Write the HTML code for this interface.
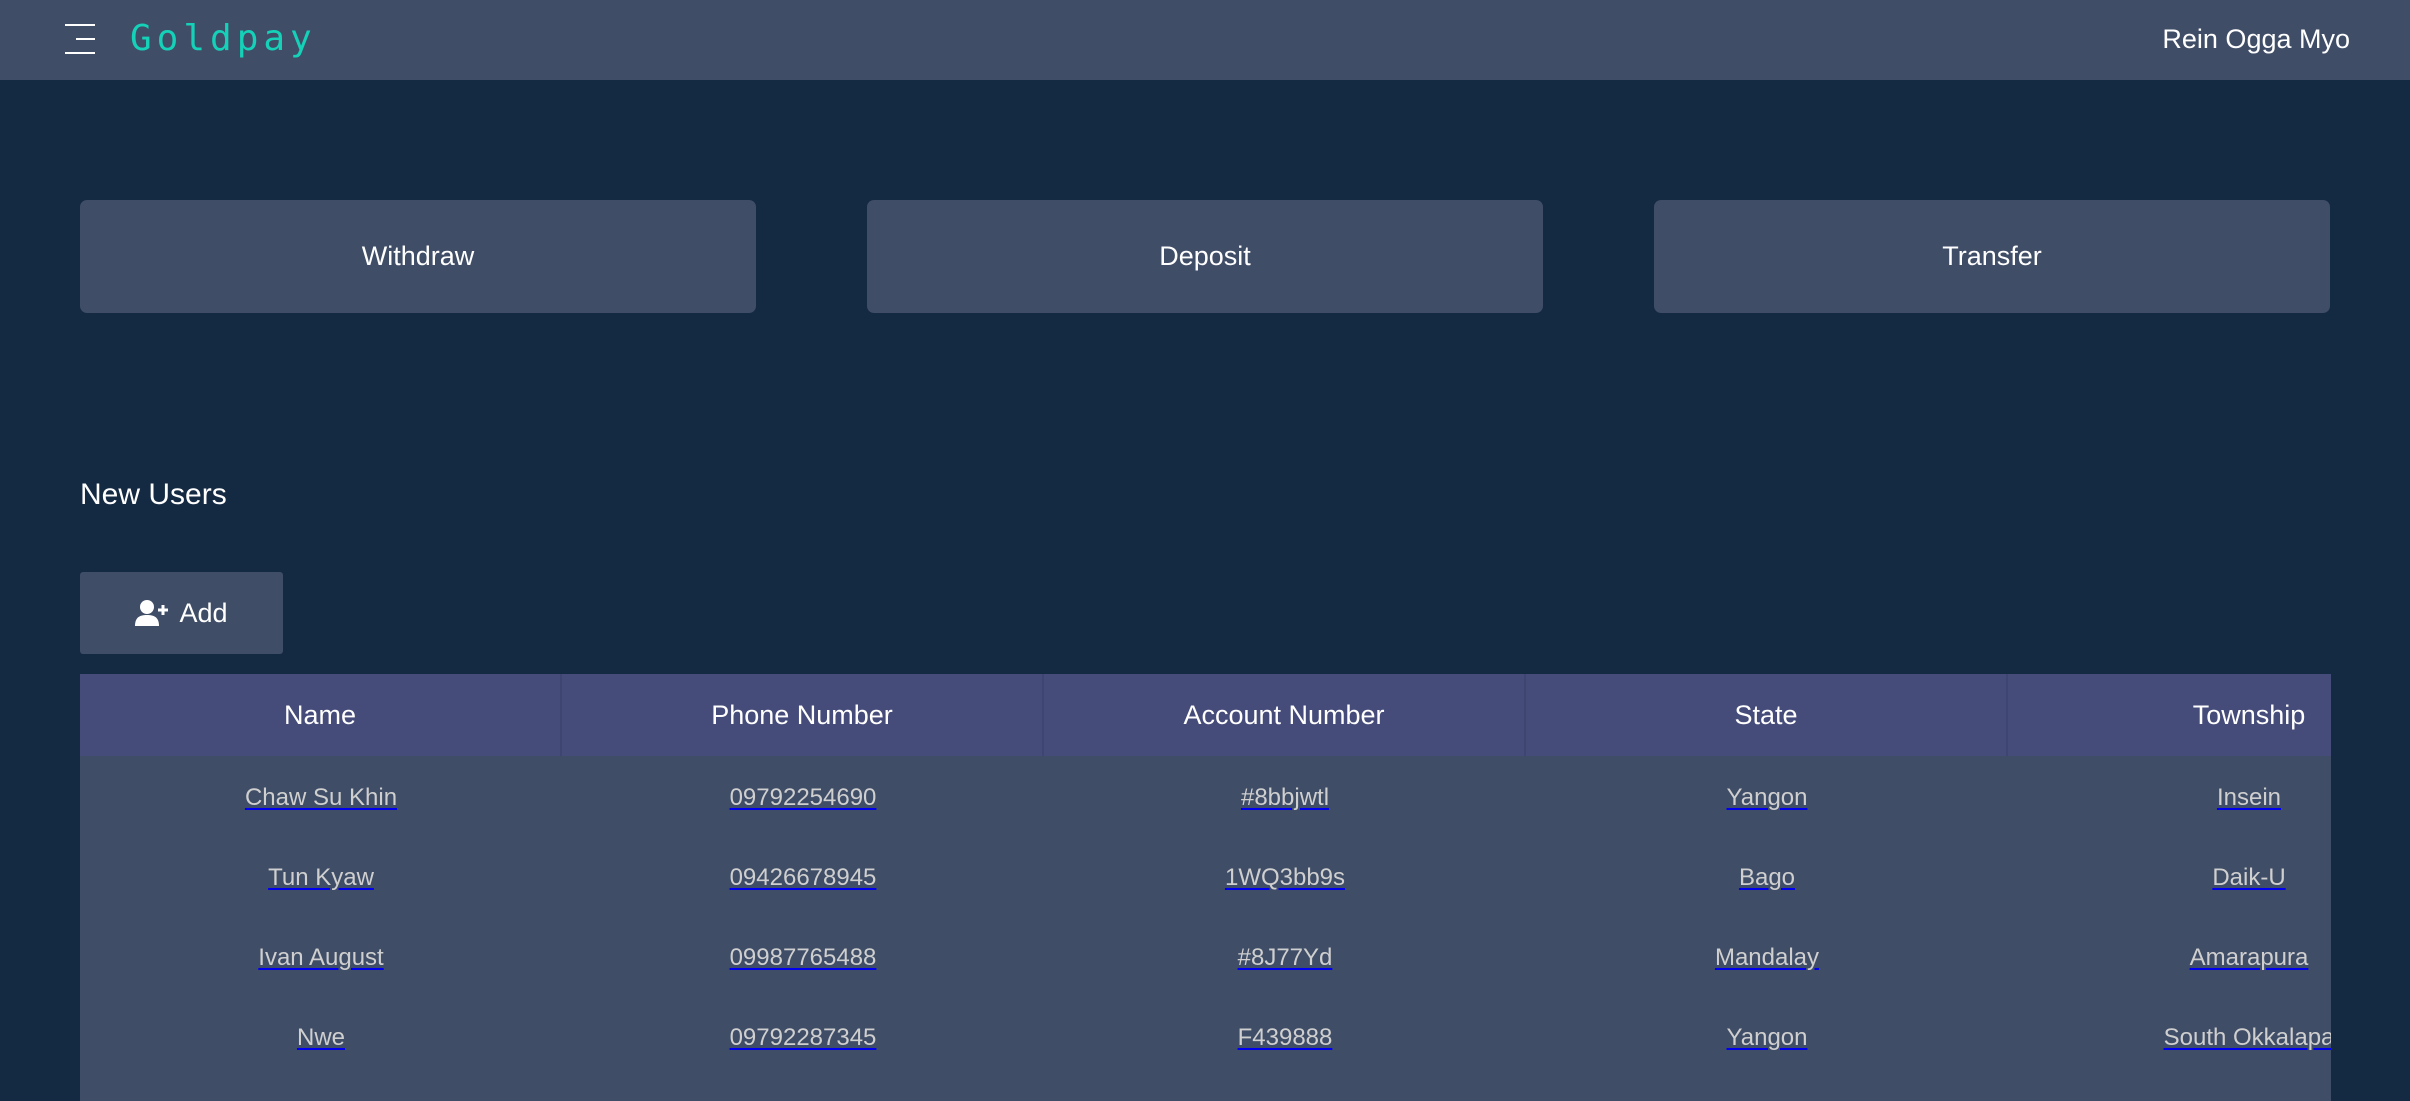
<!DOCTYPE html>
<html><head><meta charset="utf-8"><style>
*{margin:0;padding:0;box-sizing:border-box}
html,body{width:2410px;height:1101px;overflow:hidden;background:#142942;font-family:"Liberation Sans",sans-serif;color:#fff}
.hdr{position:absolute;left:0;top:0;width:2410px;height:80px;background:#3f4d67}
.ham{position:absolute;left:65px;top:24px;width:30px;height:30px}
.ham i{position:absolute;right:0;height:2px;background:#fff}
.logo{position:absolute;left:130px;top:18px;font-family:"DejaVu Sans Mono",monospace;font-size:36px;letter-spacing:5px;color:#14d1b8}
.user{position:absolute;right:60px;top:24px;font-size:27px}
.btn{position:absolute;top:200px;height:113px;width:676px;background:#3f4d67;border-radius:7px;font-size:27px;display:flex;align-items:center;justify-content:center}
.nu{position:absolute;left:80px;top:478px;font-size:30px}
.add{position:absolute;left:80px;top:572px;width:203px;height:82px;background:#3f4d67;border-radius:3px;font-size:27px;display:flex;align-items:center;justify-content:center;gap:8px}
.tbl{position:absolute;left:80px;top:674px;width:2251px;height:427px;background:#3f4d67;overflow:hidden}
.hrow{position:absolute;left:0;top:0;height:82px;width:2410px;background:#454c7a}
.c{position:absolute;width:482px;text-align:center}
.hrow .c{font-size:27px;height:82px;top:0;line-height:82px;border-right:2px solid #3e4570}
.cell{font-size:24px;color:#cfcfcf;text-decoration:underline;text-decoration-color:#0000ee;text-underline-offset:3px;text-decoration-thickness:2px}
</style></head><body>
<div class="hdr">
<div class="ham"><i style="top:0;width:30px"></i><i style="top:14px;width:19px"></i><i style="top:28px;width:30px"></i></div>
<div class="logo">Goldpay</div>
<div class="user">Rein Ogga Myo</div>
</div>
<div class="btn" style="left:80px">Withdraw</div>
<div class="btn" style="left:867px">Deposit</div>
<div class="btn" style="left:1654px">Transfer</div>
<div class="nu">New Users</div>
<div class="add"><svg width="36" height="28" viewBox="0 0 36 28"><circle cx="12" cy="8" r="7" fill="#fff"/><path d="M0 27 C0 18 5 16 12 16 C19 16 24 18 24 27 Z" fill="#fff"/><path d="M28 6v10M23 11h10" stroke="#fff" stroke-width="3"/></svg><span>Add</span></div>
<div class="tbl">
<div class="hrow">
<div class="c" style="left:0">Name</div>
<div class="c" style="left:482px">Phone Number</div>
<div class="c" style="left:964px">Account Number</div>
<div class="c" style="left:1446px">State</div>
<div class="c" style="left:1928px;border:none">Township</div>
</div>
<div style="position:absolute;left:0;top:110px;width:2410px">
<div class="c" style="left:0"><span class="cell">Chaw Su Khin</span></div>
<div class="c" style="left:482px"><span class="cell">09792254690</span></div>
<div class="c" style="left:964px"><span class="cell">#8bbjwtl</span></div>
<div class="c" style="left:1446px"><span class="cell">Yangon</span></div>
<div class="c" style="left:1928px"><span class="cell">Insein</span></div>
</div>
<div style="position:absolute;left:0;top:190px;width:2410px">
<div class="c" style="left:0"><span class="cell">Tun Kyaw</span></div>
<div class="c" style="left:482px"><span class="cell">09426678945</span></div>
<div class="c" style="left:964px"><span class="cell">1WQ3bb9s</span></div>
<div class="c" style="left:1446px"><span class="cell">Bago</span></div>
<div class="c" style="left:1928px"><span class="cell">Daik-U</span></div>
</div>
<div style="position:absolute;left:0;top:270px;width:2410px">
<div class="c" style="left:0"><span class="cell">Ivan August</span></div>
<div class="c" style="left:482px"><span class="cell">09987765488</span></div>
<div class="c" style="left:964px"><span class="cell">#8J77Yd</span></div>
<div class="c" style="left:1446px"><span class="cell">Mandalay</span></div>
<div class="c" style="left:1928px"><span class="cell">Amarapura</span></div>
</div>
<div style="position:absolute;left:0;top:350px;width:2410px">
<div class="c" style="left:0"><span class="cell">Nwe</span></div>
<div class="c" style="left:482px"><span class="cell">09792287345</span></div>
<div class="c" style="left:964px"><span class="cell">F439888</span></div>
<div class="c" style="left:1446px"><span class="cell">Yangon</span></div>
<div class="c" style="left:1928px"><span class="cell">South Okkalapa</span></div>
</div>
</div>
</body></html>
